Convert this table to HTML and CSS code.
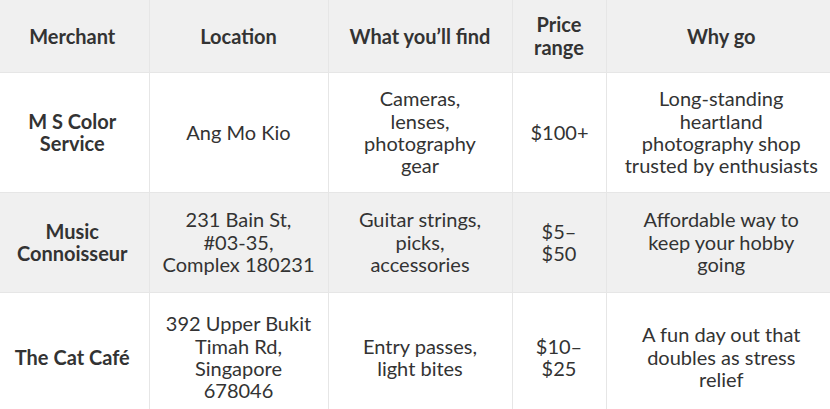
FILE: index.html
```html
<!DOCTYPE html>
<html lang="en">
<head>
<meta charset="utf-8">
<link rel="stylesheet" href="styles.css">
</head>
<body>
<div class="table-wrap">
<table class="guide">
  <colgroup>
    <col class="c-merchant">
    <col class="c-location">
    <col class="c-find">
    <col class="c-price">
    <col class="c-why">
  </colgroup>
  <thead>
    <tr class="row-head">
      <th class="col-merchant">Merchant</th>
      <th class="col-location">Location</th>
      <th class="col-find">What you’ll find</th>
      <th class="col-price">Price range</th>
      <th class="col-why">Why go</th>
    </tr>
  </thead>
  <tbody>
    <tr class="row-1">
      <td class="col-merchant name">M S Color Service</td>
      <td class="col-location">Ang Mo Kio</td>
      <td class="col-find">Cameras, lenses, photography gear</td>
      <td class="col-price">$100+</td>
      <td class="col-why">Long-standing heartland photography shop trusted by enthusiasts</td>
    </tr>
    <tr class="row-2 alt">
      <td class="col-merchant name">Music Connoisseur</td>
      <td class="col-location">231 Bain St, #03&#8209;35, Complex&nbsp;180231</td>
      <td class="col-find">Guitar strings, picks, accessories</td>
      <td class="col-price">$5–$50</td>
      <td class="col-why">Affordable way to keep your hobby going</td>
    </tr>
    <tr class="row-3">
      <td class="col-merchant name">The Cat Café</td>
      <td class="col-location">392 Upper Bukit Timah Rd, Singapore 678046</td>
      <td class="col-find">Entry passes, light bites</td>
      <td class="col-price">$10–$25</td>
      <td class="col-why">A fun day out that doubles as stress relief</td>
    </tr>
  </tbody>
</table>
</div>
</body>
</html>
```
FILE: styles.css
```css
html, body {
  margin: 0;
  padding: 0;
  background: #ffffff;
}

.table-wrap {
  width: 830px;
  overflow: hidden;
}

.guide {
  width: 840px;
  margin-left: -4px;
  border-collapse: collapse;
  table-layout: fixed;
  font-family: "Lato", "Liberation Sans", sans-serif;
  font-size: 20px;
  line-height: 22.4px;
  color: #333333;
}

.c-merchant { width: 153px; }
.c-location { width: 179px; }
.c-find { width: 184px; }
.c-price { width: 94px; }
.c-why { width: 230px; }

.guide th,
.guide td {
  border: 1px solid #e6e6e6;
  padding: 0 18px;
  text-align: center;
  vertical-align: middle;
}

.guide .col-merchant { padding: 0 14px; }
.guide .col-location { padding: 0 10px; }
.guide .col-find { padding: 0 21px; }

.guide tr > :first-child { border-left: none; }
.guide tr > :last-child { border-right: none; }
.guide thead th { border-top: none; }

.guide th {
  font-weight: 700;
  background: #f0f0f0;
}

.guide td.name {
  font-weight: 700;
}

.row-head { height: 72px; }
.row-1 { height: 120px; }
.row-2 { height: 100px; }
.row-3 { height: 130px; }

.alt td { background: #f0f0f0; }
```
